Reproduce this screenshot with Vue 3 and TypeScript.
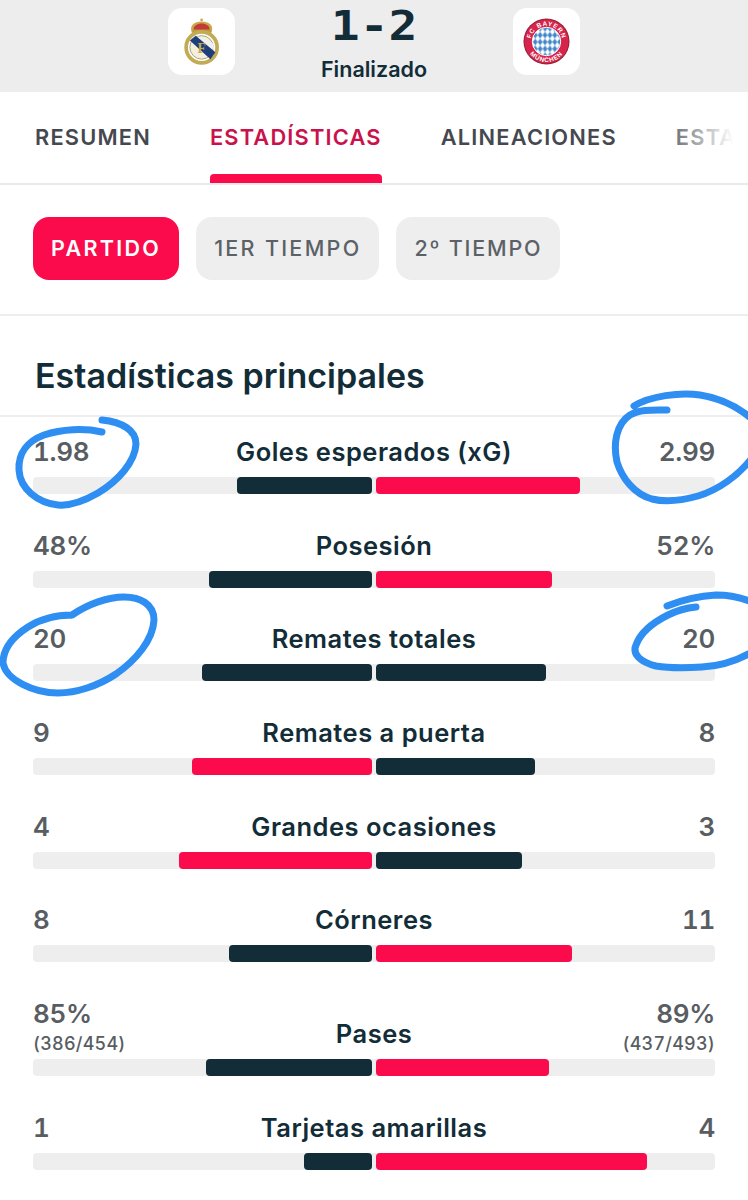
<script setup lang="ts">
interface Stat {
  label: string
  left: string
  right: string
  leftSub?: string
  rightSub?: string
  leftWidth: number
  rightWidth: number
  leftColor: 'dark' | 'red'
  rightColor: 'dark' | 'red'
}

const stats: Stat[] = [
  { label: 'Goles esperados (xG)', left: '1.98', right: '2.99', leftWidth: 135, rightWidth: 204, leftColor: 'dark', rightColor: 'red' },
  { label: 'Posesión', left: '48%', right: '52%', leftWidth: 163, rightWidth: 176, leftColor: 'dark', rightColor: 'red' },
  { label: 'Remates totales', left: '20', right: '20', leftWidth: 170, rightWidth: 170, leftColor: 'dark', rightColor: 'dark' },
  { label: 'Remates a puerta', left: '9', right: '8', leftWidth: 180, rightWidth: 159, leftColor: 'red', rightColor: 'dark' },
  { label: 'Grandes ocasiones', left: '4', right: '3', leftWidth: 193, rightWidth: 146, leftColor: 'red', rightColor: 'dark' },
  { label: 'Córneres', left: '8', right: '11', leftWidth: 143, rightWidth: 196, leftColor: 'dark', rightColor: 'red' },
  { label: 'Pases', left: '85%', right: '89%', leftSub: '(386/454)', rightSub: '(437/493)', leftWidth: 166, rightWidth: 173, leftColor: 'dark', rightColor: 'red' },
  { label: 'Tarjetas amarillas', left: '1', right: '4', leftWidth: 68, rightWidth: 271, leftColor: 'dark', rightColor: 'red' },
]

const tabs = ['RESUMEN', 'ESTADÍSTICAS', 'ALINEACIONES', 'ESTAD']
const pills = ['PARTIDO', '1ER TIEMPO', '2º TIEMPO']
</script>

<template>
  <div class="page">
    <header class="match">
      <div class="crest-box">
        <svg class="crest" viewBox="1 0 36 48" aria-label="Real Madrid">
          <path d="M9 15 C6 7 12 3.500 19 3.500 C26 3.500 32 7 29 15 Z" fill="#c8a84a" />
          <path d="M11 12 C10 8 15 5.500 19 5.500 C23 5.500 28 8 27 12 Z" fill="#c23b38" />
          <circle cx="19" cy="2" r="1.400" fill="#c8a84a" />
          <rect x="9.500" y="12" width="19" height="3" rx="1" fill="#b99a3f" />
          <circle cx="19" cy="30" r="15.800" fill="#fff" stroke="#c3aa55" stroke-width="3.800" />
          <circle cx="19" cy="30" r="12" fill="#f3efdc" stroke="#8f8f60" stroke-width="0.800" />
          <path d="M7 23 L13 18 L33 35 L28 42 Z" fill="#1d3f7c" />
          <path d="M14 18 L31 26 L32 33 Z" fill="#eef0f4" />
          <text x="19" y="36" class="crest-f">F</text>
        </svg>
      </div>
      <div class="score-col">
        <div class="score">1-2</div>
        <div class="status">Finalizado</div>
      </div>
      <div class="crest-box">
        <svg class="crest" viewBox="0 0 48 48" aria-label="FC Bayern">
          <defs>
            <pattern id="loz" width="5" height="7" patternUnits="userSpaceOnUse">
              <rect width="5" height="7" fill="#fff" />
              <path d="M2.500 0 L5 3.500 L2.500 7 L0 3.500 Z" fill="#3f86c9" />
            </pattern>
            <path id="arcTop" d="M8 24 A16 16 0 0 1 40 24" />
            <path id="arcBot" d="M3 24 A21 21 0 0 0 45 24" />
          </defs>
          <circle cx="24" cy="24" r="23.500" fill="#8f2338" />
          <circle cx="24" cy="24" r="22.500" fill="#d8234a" />
          <circle cx="24" cy="24" r="14.500" fill="url(#loz)" stroke="#fff" stroke-width="1" />
          <text class="ring-text"><textPath href="#arcTop" startOffset="50%">FC BAYERN</textPath></text>
          <text class="ring-text"><textPath href="#arcBot" startOffset="50%">MÜNCHEN</textPath></text>
        </svg>
      </div>
    </header>

    <nav class="tabs">
      <div v-for="(tab, i) in tabs" :key="i" class="tab" :class="{ active: i === 1 }">{{ tab }}</div>
      <div class="tabs-fade"></div>
    </nav>

    <div class="pills">
      <div v-for="(pill, i) in pills" :key="pill" class="pill" :class="{ on: i === 0 }">{{ pill }}</div>
    </div>

    <h2 class="title">Estadísticas principales</h2>

    <section class="rows">
      <div v-for="s in stats" :key="s.label" class="row">
        <div class="head" :class="{ tall: s.leftSub }">
          <div class="value">
            <div>{{ s.left }}</div>
            <div v-if="s.leftSub" class="sub">{{ s.leftSub }}</div>
          </div>
          <div class="label">{{ s.label }}</div>
          <div class="value right">
            <div>{{ s.right }}</div>
            <div v-if="s.rightSub" class="sub">{{ s.rightSub }}</div>
          </div>
        </div>
        <div class="track">
          <div class="half start">
            <div class="fill" :class="s.leftColor" :style="{ width: s.leftWidth + 'px' }"></div>
          </div>
          <div class="half">
            <div class="fill" :class="s.rightColor" :style="{ width: s.rightWidth + 'px' }"></div>
          </div>
        </div>
      </div>
    </section>

    <svg class="marks" viewBox="0 0 748 1200" aria-hidden="true">
      <path d="M102 420 C122 422 136 430 136 444 C135 462 118 481 98 493 C84 501 70 506 58 505 C38 503 20 489 19 470 C18 453 28 441 44 435 C62 429 84 428 102 432" />
      <path d="M634 406 C650 396 680 392 700 395 C720 398 738 407 752 419 M752 458 C738 476 718 490 698 496 C680 501 664 502 652 499 C634 494 622 478 617 462 C613 444 616 424 630 415 C640 409 654 410 667 410" />
      <path d="M72 615 C88 604 108 597 124 597 C140 597 154 604 154 620 C153 640 136 660 116 674 C98 686 76 693 58 693 C34 693 6 680 3 663 C3 648 14 636 28 627 C42 618 58 615 72 615" />
      <path d="M667 606 C682 600 700 596 716 595 C728 595 740 597 752 602 M752 652 C738 660 720 666 702 667 C686 668 668 668 656 666 C640 662 632 654 636 645 C640 634 652 623 668 615 C676 611 686 608 696 607" />
    </svg>
  </div>
</template>

<style scoped>
.page {
  position: relative;
  width: 748px;
  height: 1200px;
  overflow: hidden;
  background: #fff;
  font-family: Inter, "Liberation Sans", sans-serif;
  color: #122c38;
}
.match {
  height: 92px;
  background: #ededed;
  display: flex;
  justify-content: center;
  align-items: flex-start;
  padding-top: 8px;
  box-sizing: border-box;
}
.crest-box {
  width: 67px;
  height: 67px;
  background: #fff;
  border-radius: 14px;
  display: flex;
  align-items: center;
  justify-content: center;
}
.crest { height: 47px; width: auto; display: block; }
.crest-f { font: 700 14px "Liberation Serif", serif; fill: #c8a84a; text-anchor: middle; }
.ring-text { font: 700 6.500px "Liberation Sans", sans-serif; fill: #fff; text-anchor: middle; letter-spacing: 0.800px; }
.score-col {
  width: 278px;
  display: flex;
  flex-direction: column;
  align-items: center;
}
.score {
  font-family: "DejaVu Sans Mono", monospace;
  font-weight: 700;
  font-size: 40px;
  line-height: 38px;
  margin-top: -1px;
  transform: scaleX(1.2);
  color: #122c38;
}
.status {
  font-size: 21.500px;
  font-weight: 600;
  line-height: 26px;
  margin-top: 11px;
}
.tabs {
  position: relative;
  height: 93px;
  box-sizing: border-box;
  border-bottom: 2px solid #e9e9e9;
  display: flex;
  gap: 59px;
  padding-left: 35px;
  overflow: hidden;
  white-space: nowrap;
}
.tab {
  position: relative;
  flex: none;
  font-size: 21.800px;
  font-weight: 600;
  letter-spacing: 1.200px;
  line-height: 90px;
  color: #45494f;
}
.tab.active { color: #c9124c; }
.tab.active::after {
  content: "";
  position: absolute;
  left: 0;
  right: 0;
  bottom: 0;
  height: 9px;
  background: #fb0a4c;
  border-radius: 4px 4px 0 0;
}
.tabs-fade {
  position: absolute;
  top: 0;
  right: 0;
  width: 72px;
  height: 88px;
  background: linear-gradient(90deg, rgba(255, 255, 255, 0.25), #fff 80%);
}
.pills {
  display: flex;
  gap: 17px;
  padding: 32px 33px 34px;
  border-bottom: 2px solid #eeeeee;
}
.pill {
  height: 63px;
  line-height: 63px;
  border-radius: 16px;
  background: #eeeeee;
  color: #5b6166;
  font-size: 21.500px;
  font-weight: 500;
  letter-spacing: 2.300px;
  padding: 0 18px;
}
.pill:nth-child(3) { letter-spacing: 1.800px; }
.pill.on { background: #fb0a4c; color: #fff; font-weight: 600; }
.title {
  margin: 0;
  height: 101px;
  line-height: 92px;
  padding-top: 14px;
  box-sizing: border-box;
  padding-left: 35px;
  font-size: 34px;
  font-weight: 600;
  color: #122c38;
  border-bottom: 2px solid #eeeeee;
}
.rows { padding: 18px 33px 0 33px; }
.row { margin-bottom: 34.670px; }
.head {
  height: 34px;
  margin-bottom: 8px;
  display: flex;
  justify-content: space-between;
  align-items: flex-start;
  position: relative;
}
.head.tall { height: 54px; }
.value {
  font-size: 26px;
  font-weight: 600;
  font-variant-numeric: tabular-nums;
  letter-spacing: -0.300px;
  line-height: 33px;
  color: #585d62;
}
.value.right { text-align: right; }
.sub {
  font-size: 18px;
  font-weight: 500;
  line-height: 18px;
  margin-top: 5px;
  letter-spacing: 0.200px;
}
.label {
  position: absolute;
  left: 0;
  right: 0;
  bottom: 1px;
  text-align: center;
  font-size: 25.500px;
  font-weight: 600;
  line-height: 33px;
  color: #122c38;
  letter-spacing: 0.500px;
}
.track {
  height: 17px;
  width: 682px;
  background: #eeeeee;
  border-radius: 4px;
  display: flex;
  gap: 4px;
}
.half { flex: 1; display: flex; }
.half.start { justify-content: flex-end; }
.fill { height: 100%; border-radius: 4px; }
.fill.dark { background: #122c38; }
.fill.red { background: #fb0a4c; }
.marks {
  position: absolute;
  inset: 0;
  width: 748px;
  height: 1200px;
  pointer-events: none;
  fill: none;
  stroke: #2e8ef2;
  stroke-width: 7;
  stroke-linecap: round;
  stroke-linejoin: round;
}
</style>
